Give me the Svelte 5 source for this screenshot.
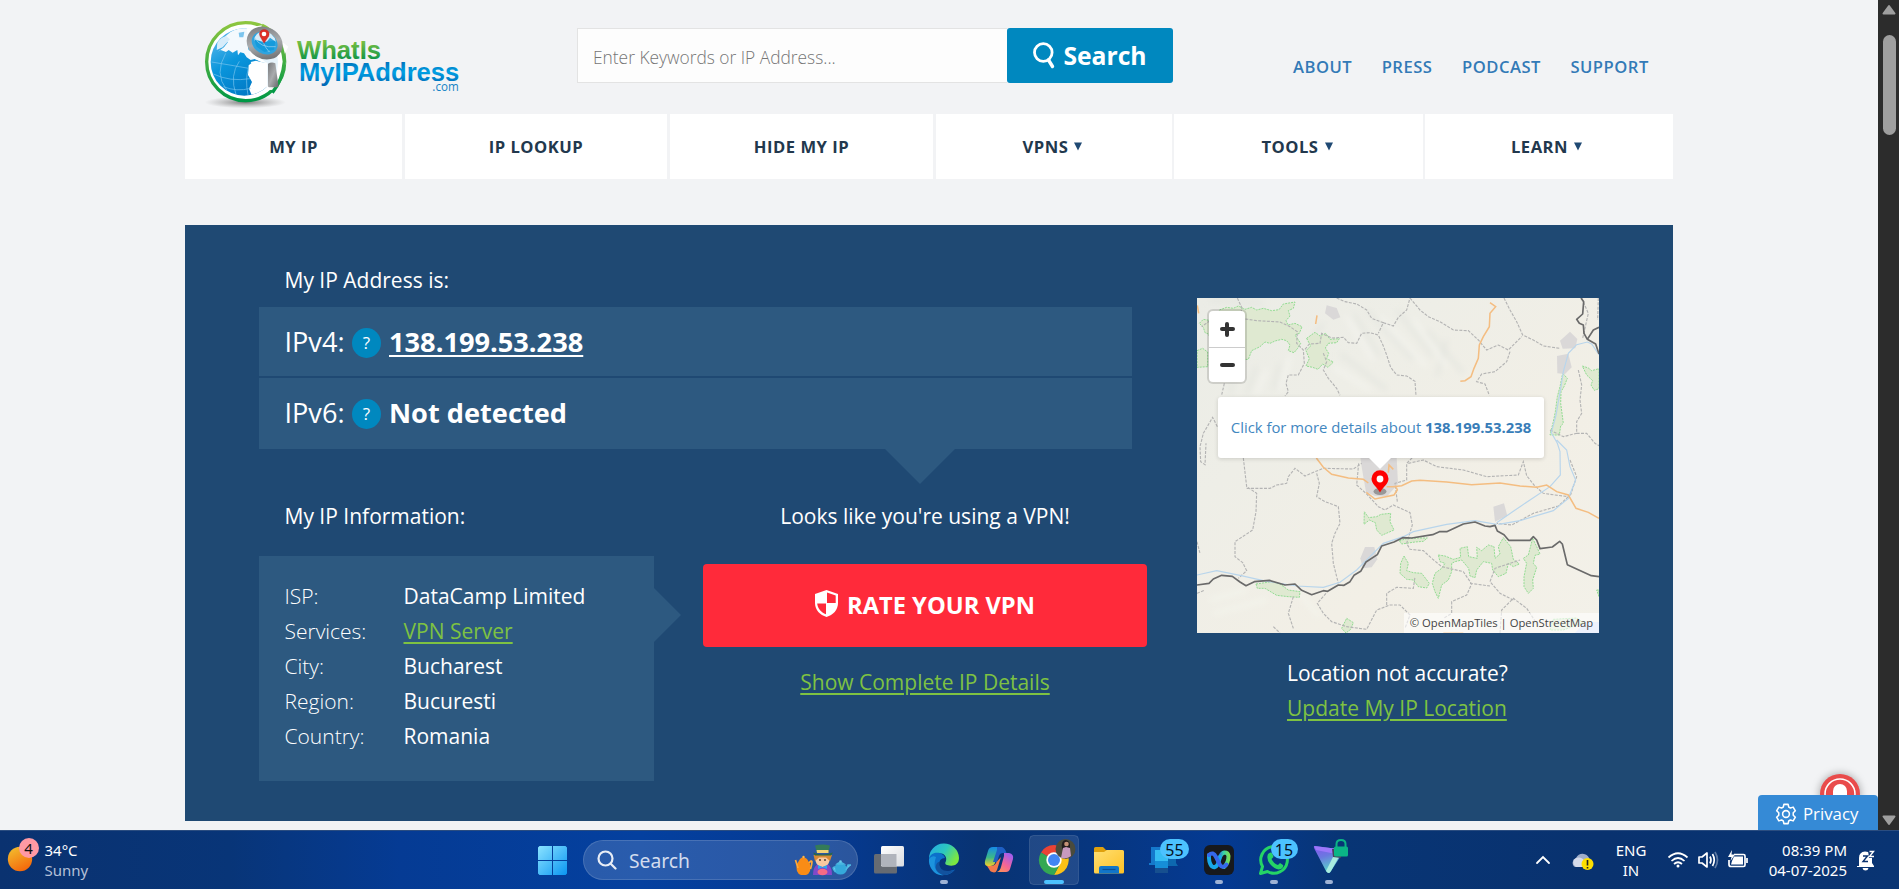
<script>
  const topLinks = ['ABOUT', 'PRESS', 'PODCAST', 'SUPPORT'];
  const menu = [
    { label: 'MY IP' }, { label: 'IP LOOKUP' }, { label: 'HIDE MY IP' },
    { label: 'VPNS', more: true }, { label: 'TOOLS', more: true }, { label: 'LEARN', more: true }
  ];
  const info = [
    ['ISP:', 'DataCamp Limited'], ['Services:', 'VPN Server'], ['City:', 'Bucharest'],
    ['Region:', 'Bucuresti'], ['Country:', 'Romania']
  ];
</script>

<div class="screen">
  <div class="browser">
    <div class="page">
      <header class="top">
        <svg class="logo" viewBox="60 51 792 276">
          <defs>
            <linearGradient id="lgG" x1="0" y1="0" x2="0" y2="1"><stop offset="0" stop-color="#8dc63f" /><stop offset="1" stop-color="#009846" /></linearGradient>
            <linearGradient id="lgT" gradientUnits="userSpaceOnUse" x1="0" y1="118" x2="0" y2="178"><stop offset="0" stop-color="#84c441" /><stop offset="1" stop-color="#129647" /></linearGradient>
            <linearGradient id="lgB" gradientUnits="userSpaceOnUse" x1="0" y1="185" x2="0" y2="255"><stop offset="0" stop-color="#0072bb" /><stop offset=".45" stop-color="#00a0e4" /><stop offset="1" stop-color="#0067b4" /></linearGradient>
            <linearGradient id="lgO" x1="0" y1="0" x2=".6" y2="1"><stop offset="0" stop-color="#6fc0ee" /><stop offset=".5" stop-color="#0a96dc" /><stop offset="1" stop-color="#0077c4" /></linearGradient>
            <linearGradient id="lgM" x1="0" y1="0" x2="1" y2="1"><stop offset="0" stop-color="#77797c" /><stop offset=".5" stop-color="#aaacae" /><stop offset="1" stop-color="#66686a" /></linearGradient>
            <radialGradient id="lgS"><stop offset="0" stop-color="#555" stop-opacity=".75" /><stop offset="1" stop-color="#888" stop-opacity="0" /></radialGradient>
            <clipPath id="lgC"><circle cx="193" cy="186" r="101" /></clipPath>
          </defs>
          <ellipse cx="196" cy="307" rx="122" ry="18" fill="url(#lgS)" />
          <circle cx="197" cy="185" r="117" fill="#fff" stroke="url(#lgG)" stroke-width="10" />
          <circle cx="193" cy="186" r="101" fill="url(#lgO)" />
          <g clip-path="url(#lgC)">
            <path d="M128 120Q155 78 215 82L205 104Q200 130 206 150L240 172 258 188 243 186 225 177 212 180 200 172 192 160 181 157 174 166 172 150 158 158 146 150 138 156 122 150 112 156 132 142 144 126Z" fill="#f3f9fd" />
            <path d="M112 128Q122 112 138 108L150 118 128 142 110 150Z" fill="#d6ecfa" />
            <path d="M176 98L193 95 190 112 178 112Z" fill="#7cc5ee" />
            <path d="M212 186L228 182 243 186 262 188V262L240 278 215 285 207 266 216 246 204 225 206 196 214 190Z" fill="#fff" />
            <path d="M95 186Q150 195 206 205M100 222Q150 246 210 236M130 260Q170 276 212 265M178 184Q148 225 168 284M137 160Q102 220 140 270M205 205Q195 240 204 285" fill="none" stroke="#7cc5ee" stroke-width="2" />
          </g>
          <path d="M200 84L244 76 325 140 306 176 318 186 292 270 260 270 258 190 212 172Z" fill="#fff" opacity=".9" />
          <path d="M246 76Q305 102 313 185Q308 240 277 278" fill="none" stroke="url(#lgG)" stroke-width="10" />
          <ellipse cx="254" cy="129" rx="48" ry="40" transform="rotate(28 254 129)" fill="#2fa4df" stroke="url(#lgM)" stroke-width="15" />
          <path d="M222 120Q226 98 250 93Q282 97 288 126L270 113 258 128 270 154Q246 154 236 139Z" fill="#d7edf9" />
          <path d="M222 118L250 126 286 122 282 149 253 156 230 140Z" fill="#159bdc" />
          <path d="M224 112Q240 145 287 140M247 122Q257 145 267 155" stroke="#a8d7f3" stroke-width="2" fill="none" />
          <path d="M252 130L240 109C229 82 276 82 266 109Z" fill="#dc2e28" stroke="#b51e1d" stroke-width="1" />
          <circle cx="252" cy="102" r="7" fill="#fff" />
          <path d="M264 191Q275 185 286 190L295 256Q296 262 287 262H267Q263 262 264 256Z" fill="url(#lgM)" />
          <text x="351" y="177" class="lt" font-size="80" textLength="252" lengthAdjust="spacingAndGlyphs" fill="url(#lgT)">WhatIs</text>
          <text x="357" y="242" class="lt" font-size="78" textLength="481" lengthAdjust="spacingAndGlyphs" fill="url(#lgB)">MyIPAddress</text>
          <text x="757" y="272" class="lc" font-size="39" textLength="79" lengthAdjust="spacingAndGlyphs">.com</text>
        </svg>
        <form class="find">
          <input placeholder="Enter Keywords or IP Address..." />
          <button type="button">
            <svg width="22" height="28" viewBox="0 0 22 28" fill="none" stroke="#fff"><circle cx="10.3" cy="10.5" r="8.800" stroke-width="2.800" /><path d="M15.500 18l4 6.500" stroke-width="3.400" stroke-linecap="round" /></svg>
            <span>Search</span>
          </button>
        </form>
        <nav class="links">{#each topLinks as l}<a href="#top">{l}</a>{/each}</nav>
      </header>

      <nav class="menu">
        {#each menu as m}
          <a href="#menu" class:more={m.more}><span>{m.label}</span>{#if m.more}<svg width="8" height="9" viewBox="0 0 8 9"><path d="M0 .5h8L4 8.5z" fill="#1f4973" /></svg>{/if}</a>
        {/each}
      </nav>

      <main class="hero">
        <section class="left">
          <h2>My IP Address is:</h2>
          <div class="ips">
            <div class="ip v4"><span class="lab">IPv4:</span><i>?</i><b class="u">138.199.53.238</b></div>
            <div class="ip v6"><span class="lab">IPv6:</span><i>?</i><b>Not detected</b></div>
          </div>
          <div class="lower">
            <div class="about">
              <h2>My IP Information:</h2>
              <dl>
                {#each info as [k, v]}
                  <dt>{k}</dt><dd>{#if v === 'VPN Server'}<a href="#vpn">{v}</a>{:else}{v}{/if}</dd>
                {/each}
              </dl>
            </div>
            <div class="act">
              <p>Looks like you're using a VPN!</p>
              <button type="button" class="rate">
                <svg width="23" height="27" viewBox="0 0 23 27"><path d="M11.5 0L23 4V13C23 20 18 25 11.5 27C5 25 0 20 0 13V4Z" fill="#fff" /><path d="M12 2.6L20.7 5.5V13H12ZM11 13.6V24.3C6 22.5 2.6 18.6 2.2 13.6Z" fill="#ff2a3a" /></svg>
                <span>RATE YOUR VPN</span>
              </button>
              <a href="#details" class="show">Show Complete IP Details</a>
            </div>
          </div>
        </section>

        <section class="right">
          <div class="map">
            <svg viewBox="51 54 1206 1005" width="402" height="335">
              <defs>
                <linearGradient id="land" x1="0" y1="0" x2="1" y2="1"><stop offset="0" stop-color="#ebece6" /><stop offset=".3" stop-color="#eeeee7" /><stop offset=".65" stop-color="#f2efe6" /><stop offset="1" stop-color="#f3f1e9" /></linearGradient>
                <filter id="soft"><feGaussianBlur stdDeviation="9" /></filter>
              </defs>
              <rect x="51" y="54" width="1206" height="1005" fill="url(#land)" />
              <g filter="url(#soft)" fill="none" stroke-width="9">
                <path stroke="#e2e4de" d="M430 130L400 170M520 100L600 230M560 90L700 240M480 220L620 330M650 90L760 230M740 150L850 280M300 250L280 330M230 260L200 340M160 300L150 340M800 180L770 290M90 60L250 70" />
                <path stroke="#f5f5f0" d="M500 110L580 240M600 110L740 260M460 260L570 330M700 120L800 260M330 230L300 330M260 270L230 340" />
                <path stroke="#f4f6ee" d="M90 960L200 930M100 1000L260 960M350 930L420 1010" />
              </g>
              <g class="park">
                <path d="M58 130L70 118 115 126 118 90 140 82 160 85 175 78 195 88 215 82 230 90 250 85 275 92 297 89 310 72 345 66 340 85 325 92 330 108 318 122 324 135 345 130 366 140 358 160 345 165 362 190 353 205 342 218 325 212 330 195 320 182 305 178 285 183 270 190 255 186 240 200 215 212 205 238 160 240 100 190 85 162 75 158 70 142Z" />
                <path d="M51 212L68 205 83 216V260L51 262Z" />
                <path d="M380 175L405 157 420 168 437 160 450 178 478 176 470 188 445 190 436 204 446 220 440 236 460 246 444 262 428 252 414 268 398 262 378 258 388 236 378 212 392 198Z" />
                <path d="M1148 280L1162 295 1152 320 1143 335 1142 370 1150 430 1142 438 1138 465 1110 465 1120 425 1126 395 1132 350 1140 320Z" />
                <path d="M1207 258L1225 264 1235 272 1257 266V326L1243 331 1233 315 1238 302 1220 285Z" />
                <path d="M553 695L566 713 590 710 603 703 632 700 630 725 642 750 605 766 590 750 586 728 568 720 552 733Z" />
                <path d="M228 912L275 905 300 912 325 930 360 935 358 952 325 950 290 946 255 925 232 925Z" />
                <path d="M658 782L680 776 715 774 742 774 730 784 705 786 665 792Z" />
                <path d="M672 828L685 850 680 872 700 878 725 880 748 910 740 924 715 920 700 900 680 898 660 880 662 850Z" />
                <path d="M775 825L795 828 820 838 842 832 840 805 862 800 866 830 892 835 890 802 905 812 925 795 942 800 945 835 960 822 955 800 970 773 992 800 1000 838 1018 852 1000 860 985 850 978 880 955 890 938 870 935 850 910 845 890 870 885 893 870 888 866 865 845 840 825 845 815 850 815 875 805 900 785 915 775 955 765 935 757 910 765 880 785 865 795 850 780 845Z" />
                <path d="M1058 775L1070 800 1080 822 1065 826 1060 850 1070 862 1058 900 1060 925 1045 940 1032 920 1032 890 1040 850 1030 835 1045 825Z" />
                <path d="M500 1015L520 1028 512 1048 498 1059 485 1045ZM1120 1018L1190 1014 1210 1028 1150 1050 1110 1050ZM1250 930H1257V950Z" />
              </g>
              <path fill="#cfdcfa" d="M1215 1026H1257V1059H1185Z" />
              <g fill="#dad8d8">
                <path d="M440 76L470 84 481 112 460 119 435 100Z" /><path d="M1140 182L1170 155 1192 177 1186 205 1148 206Z" /><path d="M1131 228L1165 221 1175 262 1155 282 1132 280Z" />
                <path d="M541 530H650L654 612 620 650 585 648 558 636 550 590 545 560Z" /><path d="M940 680L972 670 982 707 945 725Z" /><path d="M555 801H583L592 838 575 862 548 865 541 835Z" />
              </g>
              <g class="border">
                <path d="M172 54L185 82 182 110 160 120 100 115 65 140M183 115L230 122 300 126 330 140 352 155 350 190 370 210 373 250 355 285 325 285 318 310 325 335 315 348M375 208L388 192 420 190 425 160 455 174 490 172 505 188 530 190 545 160 570 158 595 165 610 198 620 225 632 262 650 285 680 288 705 304 708 348M470 54L495 65 530 72 560 90 575 115 610 128 595 160M610 128L640 138 655 112 680 90 690 54M690 54L720 90 745 110 780 125 820 150 865 152 895 180 920 210 955 195 985 210 1025 170M972 54L990 90 1010 125 1028 165 1060 180 1090 198 1140 205M990 215L980 245 945 275 905 282 890 305 915 312 928 346M430 220L440 245 430 270 445 295 470 325 480 346M1255 54L1253 120M1195 270L1205 315 1200 360 1205 400 1190 425 1190 460 1150 470 1110 450M1190 460L1220 460 1245 490 1257 497" />
                <path d="M133 310L125 345M112 440L98 412 70 460 60 500 62 545 75 554 78 490M190 534L200 620 230 640 228 695 218 750 165 785 165 830 188 848 200 872 175 895M200 625L270 625 290 615 320 610 325 590 345 565 375 588 405 575 430 565 520 567 545 550M410 580L418 610 410 650 435 665 475 680 480 730 465 760 455 790 460 850 475 910M536 550L530 615 558 640 595 680 615 690 640 675 690 698 697 735 680 790 690 808 730 812 755 835 785 860 850 875 875 912 860 945 815 965 815 1000 790 1015M685 550L730 540 770 560 850 570 920 590 1015 585 1030 545 1040 587 1062 615 1090 640 1125 645 1165 650M652 665L645 610 680 600 680 550 700 530M1165 650L1135 678 1060 700 995 735 950 730M1170 540L1190 590 1170 650M438 940L412 970 430 1000 455 1025 500 1040 560 1048 590 990 630 975 660 975 690 1005 675 1045M620 975L620 940 650 922 700 925 705 890M340 950L325 1000 340 1045M280 1040L300 1059M51 785L60 820M51 940L75 930M960 1059L965 990 1000 955 1040 985 1070 1030M1000 960L960 940 930 905 945 865 1020 840M870 910L930 918M1205 54L1225 100 1208 175" />
              </g>
              <g fill="none" stroke="#b8d5ec" stroke-width="3.5">
                <path d="M1257 224L1235 192 1222 186 1190 194 1165 220 1150 275 1143 320 1128 405 1114 458 1132 490 1140 515 1141 585 1110 620 1020 680 950 728M1130 480L1160 510 1170 560 1187 600 1165 655 1120 692 1020 722 955 733M51 885L110 872 180 886 250 902 350 918 430 922 480 907 530 870 570 830 610 790 670 770 700 755 800 733 885 722 950 733" />
              </g>
              <g fill="none" stroke="#f4bd81" stroke-width="4.600">
                <path d="M52 76L56 100M411 106L407 132M930 68L947 80 930 100 928 140 910 170 898 195 895 235 882 265 873 290 855 302 841 304M409 534L430 562 455 583 505 594 550 598 565 609M559 637L585 657 642 645 652 630 648 620 620 620M625 578L627 555 640 568M638 620L665 617 695 603 720 601 800 606 875 614 960 609 1020 618 1070 622 1100 615 1130 635 1165 645 1188 685 1225 697 1257 715M790 1058H850" />
              </g>
              <path fill="none" stroke="#6a6a6a" stroke-width="5" stroke-linejoin="round" d="M51 915L87 910 100 897 125 886 157 889 180 906 198 917 223 905 268 901 315 915 345 912 365 931 395 944 430 932 443 934 475 915 492 916 510 905 522 886 542 874 558 846 592 824 605 798 642 786 668 773 695 774 758 764 778 755 800 755 850 732 885 726 915 738 930 740 945 736 952 753 972 764 986 781 1050 781 1060 770 1070 780 1080 806 1117 801 1139 784 1147 792 1162 854 1234 887 1257 890M1203 54L1211 65 1208 102 1190 118 1198 130 1210 135 1212 160 1222 178 1247 192 1257 222M1222 178L1240 150 1257 142" />
            </svg>
            <div class="zoom"><span class="zp"></span><span class="zm"></span></div>
            <div class="pop">Click for more details about <b>138.199.53.238</b></div>
            <svg class="pin" width="40" height="34" viewBox="0 0 40 34"><ellipse cx="20" cy="21.500" rx="6.500" ry="3.500" fill="#000" opacity=".3" /><path d="M20 22.5C17 17 11.5 14 11.5 8.8a8.5 8.5 0 0 1 17 0C28.500 14 23 17 20 22.500Z" fill="#fe0000" /><circle cx="20" cy="9" r="3.4" fill="#fff" /></svg>
            <div class="attr">© OpenMapTiles | OpenStreetMap</div>
          </div>
          <p class="loc">Location not accurate?<br /><a href="#update">Update My IP Location</a></p>
        </section>
      </main>

      <div class="alert"><svg width="60" height="60" viewBox="0 0 60 60"><circle cx="30" cy="30" r="20" fill="#e94b4b" /><circle cx="30" cy="30" r="15" fill="none" stroke="#fff" stroke-width="1.500" /><path d="M23 34V27a7 7 0 0 1 14 0V34Z" fill="#fff" /></svg></div>
      <div class="privacy">
        <svg width="22" height="22" viewBox="0 0 24 24" fill="none" stroke="#fff" stroke-width="1.700" stroke-linejoin="round"><path d="M9.7 1.500h4.600l.7 3 1.800 1 3-1 2.400 4-2.300 2.200v2.600l2.300 2.200-2.400 4-3-1-1.800 1-.7 3H9.700l-.7-3-1.800-1-3 1-2.400-4 2.300-2.200v-2.600L1.800 8.500l2.400-4 3 1 1.800-1z" /><circle cx="12" cy="12" r="3.700" /></svg>
        <span>Privacy</span>
      </div>
    </div>
    <div class="scroll">
      <svg width="21" height="20" viewBox="0 0 21 20"><path d="M11 6L16.500 13.500H5.500Z" fill="#9f9f9f" stroke="#9f9f9f" stroke-width="2" stroke-linejoin="round" /></svg>
      <span class="thumb"></span>
      <svg class="dn" width="21" height="20" viewBox="0 0 21 20"><path d="M11 14L16.500 6.500H5.500Z" fill="#9f9f9f" stroke="#9f9f9f" stroke-width="2" stroke-linejoin="round" /></svg>
    </div>
  </div>

  <footer class="bar">
    <div class="weather">
      <svg width="41" height="58" viewBox="0 831 41 58">
        <defs><linearGradient id="sun" x1=".2" y1="0" x2=".7" y2="1"><stop offset="0" stop-color="#f2bd2e" /><stop offset="1" stop-color="#f5650a" /></linearGradient></defs>
        <circle cx="20" cy="859" r="12.200" fill="url(#sun)" /><circle cx="29" cy="848" r="10" fill="#ff99a4" />
        <text x="28.500" y="853.500" text-anchor="middle" font-size="15" fill="#111">4</text>
      </svg>
      <p>34°C<br /><span>Sunny</span></p>
    </div>
    <svg class="start" width="29" height="29" viewBox="0 0 29 29">
      <defs><linearGradient id="win" x1="0" y1="0" x2="1" y2="1"><stop offset="0" stop-color="#8be3ff" /><stop offset="1" stop-color="#0a95f2" /></linearGradient></defs>
      <path d="M1.500 0H14V14H0V1.500ZM15 0H27.500L29 1.500V14H15ZM0 15H14V29H1.500L0 27.500ZM15 15H29V27.500L27.500 29H15Z" fill="url(#win)" />
    </svg>
    <div class="wsearch">
      <svg width="20" height="20" viewBox="0 0 20 20" fill="none" stroke="#e8edf6" stroke-width="2.200"><circle cx="8.500" cy="8.500" r="7" /><path d="M13.500 13.500L18.500 18.500" stroke-linecap="round" /></svg>
      <span>Search</span>
      <svg class="hat" width="58" height="34" viewBox="792 843 58 34">
        <path d="M799 859Q802 855.500 806 859L809 864Q811 873 805 875H800Q794 873 796 864Z" fill="#f98c16" /><path d="M797 868L794.500 860M808 863Q813 857 809.500 869" fill="none" stroke="#ffa938" stroke-width="1.700" /><circle cx="802.500" cy="857" r="1.200" fill="#ffb545" />
        <path d="M812 875Q812 863 822 863Q831 863 831 875Z" fill="#8149c9" /><path d="M814 856Q814 867 821.500 867Q829 867 829 856Z" fill="#f8c9a0" /><path d="M812.500 855L831 855 829 861 825 857.500 818 857.500 814 861Z" fill="#d78a35" />
        <path d="M814 845.500Q821 843.500 829 845.500L827 853H816Z" fill="#347b59" /><path d="M815.500 850H827.500V853H816Z" fill="#efd276" /><path d="M812 852.500Q821 856.500 832 852.500L830 855.500H814Z" fill="#286749" />
        <path d="M817 865L821.500 867 826 865V869L821.500 867.500 817 869Z" fill="#2aa5ef" /><circle cx="819" cy="860" r=".9" fill="#3c3326" /><circle cx="824" cy="860" r=".9" fill="#3c3326" /><ellipse cx="821.500" cy="872" rx="5" ry="3.300" fill="#f56b85" />
        <ellipse cx="839.500" cy="869" rx="6.500" ry="5.500" fill="#35a9db" /><path d="M836 864Q839 861 843 864ZM845 870L847 865 850 865M834 867Q830 867 834.500 872" fill="#6bcaea" stroke="#49b8e2" stroke-width="1.500" /><circle cx="839.500" cy="861.500" r="1.300" fill="#6bcaea" />
      </svg>
    </div>
    <div class="apps">
      <svg viewBox="861 831 55 58">
        <defs><linearGradient id="tv" x1="0" y1="0" x2="1" y2="1"><stop offset="0" stop-color="#fff" /><stop offset="1" stop-color="#d9dce0" /></linearGradient></defs>
        <rect x="874" y="854" width="23" height="19.500" rx="1.500" fill="#666b72" /><rect x="881" y="846" width="23" height="20.500" rx="1.500" fill="url(#tv)" /><path d="M881 854H896.500V866.500H882.500L881 865Z" fill="#b0b4bc" />
      </svg>
      <svg viewBox="916 831 55 58">
        <defs><linearGradient id="ed" x1="0" y1="0" x2="1" y2=".5"><stop offset="0" stop-color="#23a7e8" /><stop offset=".55" stop-color="#2cc8bf" /><stop offset="1" stop-color="#7be741" /></linearGradient></defs>
        <path d="M929 859A15 15 0 0 1 959 858C959 865 953 867 947 865Q944 864 946 861C948 854 938 849 929 859Z" fill="url(#ed)" />
        <path d="M929 858C932 850 944 852 945 858Q939 858 939 865 940 875 955 869.500C951 875 944 876 939 874Q929 870 929 858Z" fill="#0c70cb" /><path d="M936 857Q931 872 944 875C935 877 928 867 929 859Q932 855 936 857Z" fill="#1c93dd" /><path d="M939 862Q939 874 954.500 870C951 874 947 875 943 875 932 871 936 862 939 862Z" fill="#12529e" />
        <rect x="940" y="880" width="8" height="4" rx="2" fill="#9db2d5" />
      </svg>
      <svg viewBox="971 831 55 58">
        <defs><linearGradient id="cp1" x1="0" y1="0" x2="0" y2="1"><stop offset="0" stop-color="#168be8" /><stop offset=".55" stop-color="#3cb987" /><stop offset="1" stop-color="#f4cf29" /></linearGradient><linearGradient id="cp2" x1=".6" y1="0" x2="0" y2="1"><stop offset="0" stop-color="#a65ee9" /><stop offset=".5" stop-color="#f56596" /><stop offset="1" stop-color="#fd9a4e" /></linearGradient></defs>
        <path d="M993 847H1002Q1000 847 999 850L995 863Q994 866 990 866H988Q984 866 985 861L988 851Q989 847 993 847Z" fill="url(#cp1)" /><path d="M997 847H1002Q1005 848 1006.500 853H1003Q1000 853 999 856L997 862H993L997 850Z" fill="#1e5fc4" />
        <path d="M1004 853H1009Q1014 854 1013 859L1010 869Q1009 872 1006 872H997Q1000 871 1001 867L1004 856Z" fill="url(#cp2)" /><path d="M987 866H991Q995 866 996.500 862L1001 857 997 870Q996 872.500 994 872.500 990 872 989 869Z" fill="#f47a4c" />
      </svg>
      <svg viewBox="1026 831 55 58">
        <rect x="1029.500" y="835.500" width="49" height="49" rx="4" fill="#fff" fill-opacity=".1" stroke="#fff" stroke-opacity=".13" />
        <path d="M1054 860L1041 852.500A15 15 0 0 1 1067 852.500H1054Z" fill="#ea4335" /><path d="M1054 860V853H1067A15 15 0 0 1 1054 875L1060 864Z" fill="#fbc116" /><path d="M1054 860L1060 864 1054 875A15 15 0 0 1 1041 852.500Z" fill="#34a853" />
        <circle cx="1054" cy="860" r="7.700" fill="#fff" /><circle cx="1054" cy="860" r="6" fill="#4285f4" />
        <circle cx="1065.500" cy="849" r="10" fill="#4a4b3c" /><path d="M1062 848Q1061 840 1066 840Q1071 841 1070 849L1067 850H1063Z" fill="#221d1d" /><circle cx="1066.500" cy="844" r="2.300" fill="#c59277" /><path d="M1063 848L1066 847 1070 848 1071 856Q1067 859.500 1061 858Z" fill="#c79abf" />
        <rect x="1044" y="880" width="20" height="4" rx="2" fill="#4cc2ff" />
      </svg>
      <svg viewBox="1081 831 55 58">
        <defs><linearGradient id="fo" x1="0" y1="0" x2="1" y2="1"><stop offset="0" stop-color="#ffdf72" /><stop offset="1" stop-color="#fdc125" /></linearGradient></defs>
        <path d="M1094 848.500Q1094 847 1095.500 847H1103L1106 850H1112V856H1094Z" fill="#dfa00d" /><path d="M1094 852H1104L1107 850H1122.500Q1124 850 1124 851.500V872Q1124 873.500 1122.500 873.500H1095.500Q1094 873.500 1094 872Z" fill="url(#fo)" /><path d="M1099 873.500V868Q1099 866 1101 866H1117Q1119 866 1119 868V873.500Z" fill="#1276c9" /><path d="M1102.500 869.500H1115.500" stroke="#0b4f97" stroke-width="1.200" />
      </svg>
      <svg viewBox="1136 831 55 58">
        <path d="M1151 847H1165V872H1155V865H1149V863H1151Z" fill="#1579cc" /><path d="M1165 858H1176V863L1178 866H1155V858Z" fill="#0d68af" /><path d="M1155 850H1168V861H1155Z" fill="#36bdf3" /><path d="M1155 861H1168V868H1155Z" fill="#168ed8" /><path d="M1155 868H1168V873H1155Z" fill="#164f8f" />
        <rect x="1160" y="839" width="29" height="20" rx="10" fill="#4cc2ff" /><text x="1174.500" y="856" text-anchor="middle" font-size="16" fill="#06101f">55</text>
      </svg>
      <svg viewBox="1191 831 55 58">
        <defs><linearGradient id="wx" gradientUnits="userSpaceOnUse" x1="1207" y1="0" x2="1229" y2="0"><stop offset="0" stop-color="#15a9ed" /><stop offset=".5" stop-color="#2857e5" /><stop offset=".75" stop-color="#37d2aa" /><stop offset="1" stop-color="#79df56" /></linearGradient></defs>
        <rect x="1204" y="845" width="30" height="30" rx="6" fill="#17191d" />
        <path d="M1220 857Q1221.500 853 1224.500 852.500 1228 852.500 1228.500 856 1228.500 863 1224 867" fill="none" stroke="url(#wx)" stroke-width="4" stroke-linecap="round" /><path d="M1209 855Q1208.500 862 1211.500 866 1215 869 1218 864L1220 857" fill="none" stroke="#18a8e8" stroke-width="4" stroke-linecap="round" /><path d="M1209 855Q1213 851 1216 857L1220 865Q1223 869 1226.500 864.500" fill="none" stroke="#3568eb" stroke-width="4" stroke-linecap="round" />
        <rect x="1215" y="880" width="8" height="4" rx="2" fill="#9db2d5" />
      </svg>
      <svg viewBox="1246 831 55 58">
        <path d="M1260.500 873.500L1262.500 866.500A13.300 13.300 0 1 1 1267.500 871.500Z" fill="none" stroke="#25d366" stroke-width="3" stroke-linejoin="round" /><path d="M1268 854Q1271 851 1272.500 854L1273.500 857 1271.500 859Q1274 864 1278 865L1280 863 1283 865Q1284 867 1281 869 1276 871 1270 864 1266 859 1268 854Z" fill="#25d366" />
        <rect x="1271" y="839" width="27" height="20" rx="10" fill="#4cc2ff" /><text x="1284" y="856" text-anchor="middle" font-size="16" fill="#06101f">15</text><rect x="1270" y="880" width="8" height="4" rx="2" fill="#9db2d5" />
      </svg>
      <svg viewBox="1301 831 55 58">
        <defs><linearGradient id="pv" x1="0" y1="0" x2=".35" y2="1"><stop offset="0" stop-color="#8554f0" /><stop offset=".45" stop-color="#6b78e0" /><stop offset="1" stop-color="#57d7c9" /></linearGradient></defs>
        <path d="M1315 846L1338 849Q1344 850 1342 854L1331 871Q1329 875 1326 871L1314.500 849Q1313 846 1315 846Z" fill="url(#pv)" /><path d="M1314 846L1338 849Q1344 850 1341 855L1316 850Z" fill="#9b78fa" /><path d="M1340 855L1331 871Q1329 875 1326 871L1334 855Z" fill="#a9ece0" /><path d="M1332 849H1342L1341 858 1333 857Z" fill="#49405e" />
        <path d="M1336.500 848V844Q1336.500 840 1341 840Q1345.500 840 1345.500 844V848" fill="none" stroke="#0bb586" stroke-width="2" /><rect x="1334" y="846.500" width="14" height="10" rx="1.500" fill="#0bb586" /><rect x="1325" y="880" width="8" height="4" rx="2" fill="#9db2d5" />
      </svg>
    </div>
    <div class="tray">
      <svg width="74" height="58" viewBox="1530 831 74 58">
        <path d="M1537 863L1543 857 1549 863" fill="none" stroke="#fff" stroke-width="1.800" stroke-linecap="round" /><path d="M1575 867A5 5 0 0 1 1576 858Q1579 853 1584 854 1589 855 1590 861L1587 867Z" fill="#9fadc9" /><path d="M1576 858Q1582 856 1586 863L1583 867H1576A5 5 0 0 1 1576 858Z" fill="#d5dbea" /><circle cx="1587.500" cy="864" r="6" fill="#fddf00" /><path d="M1587.500 860V865.500M1587.500 867V868.500" stroke="#222" stroke-width="1.600" />
      </svg>
      <p class="lang">ENG<br />IN</p>
      <svg width="90" height="58" viewBox="1663 831 90 58" fill="none" stroke="#fff" stroke-width="1.700">
        <path d="M1668.500 857.500Q1678 849 1687.500 857.500M1671.500 861Q1678 855 1684.500 861M1674 864Q1678 860.500 1682 864" /><circle cx="1678" cy="866" r="1.500" fill="#fff" stroke="none" />
        <path d="M1699 857H1702L1707 853V867L1702 863H1699Z" stroke-linejoin="round" /><path d="M1710 856.500Q1712 860 1710 863.500M1712.500 854Q1716 860 1712.500 866" /><path d="M1715 852Q1720 860 1715 868" stroke-opacity=".35" />
        <path d="M1734 854.500H1743.500Q1745 854.500 1745 856V865Q1745 866.500 1743.500 866.500H1731Q1729 866.500 1729 864.500V860M1747 858V863" /><path d="M1732 861L1734 856.500H1743V864.500H1731Z" fill="#fff" stroke="none" /><path d="M1732 850L1728 857H1731.500L1730.500 861 1735 854.500H1731.500Z" fill="#fff" stroke="none" />
      </svg>
      <p class="clock">08:39 PM<br />04-07-2025</p>
      <svg width="26" height="58" viewBox="1853 831 26 58"><path d="M1859 866V858Q1859 852 1865 851.500 1872 852 1872 858V863L1874 866V867H1857V866ZM1862.500 868H1868.500Q1868 870.500 1865.500 870.500 1863 870.500 1862.500 868Z" fill="#fff" /><path d="M1863 856H1867.500L1863 861.500H1868" fill="none" stroke="#0a316e" stroke-width="1.400" /><path d="M1868 850H1875V858H1869Z" fill="#0a316e" /><path d="M1869.500 851.500H1873.500L1869.500 856.500H1874" fill="none" stroke="#fff" stroke-width="1.400" /></svg>
    </div>
  </footer>
</div>

<style>
  :global(body) { margin: 0; overflow: hidden; }
  .screen { width: 1899px; height: 889px; display: flex; flex-direction: column; font-family: "Open Sans", sans-serif; overflow: hidden; }
  .screen * { box-sizing: border-box; }
  p, h2, dl, dd { margin: 0; font-weight: 400; }
  a { text-decoration: none; }
  svg { display: block; flex: none; }
  .browser { height: 830px; display: flex; }
  .page { width: 1878px; height: 830px; background: #f2f3f5; position: relative; overflow: hidden; padding-left: 185px; }
  .top { height: 114px; display: flex; align-items: flex-start; }
  .logo { width: 264px; height: 92px; margin: 17px 0 0 15px; }
  .lt { font-family: "Liberation Sans", sans-serif; font-weight: 700; }
  .lc { font-family: "Open Sans", sans-serif; fill: #1683c5; }
  .find { display: flex; margin: 28px 0 0 113px; height: 55px; }
  .find input { width: 430px; border: 1px solid #e3e3e3; background: #fdfdfd; padding: 2px 15px 0; font: 300 17.35px "Open Sans", sans-serif; color: #757575; border-right: 0; outline: 0; border-radius: 0; }
  .find input::placeholder { color: #757575; opacity: 1; }
  .find button { width: 166px; border: 0; border-radius: 3px; background: #0088bf; color: #fff; display: flex; align-items: center; justify-content: center; gap: 8px; font: 700 24.7px "Open Sans", sans-serif; padding: 0; }
  .links { display: flex; gap: 29.5px; margin: 55px 0 0 120px; font-size: 16.6px; font-weight: 600; line-height: 24px; letter-spacing: .5px; }
  .links a { color: #337ab7; }
  .menu { width: 1488px; height: 65px; display: grid; grid-template-columns: 220px 265px 266px 238px 251px 248px; }
  .menu a { margin-right: 3px; background: #fff; color: #22384d; font-weight: 700; font-size: 16.6px; letter-spacing: .5px; display: flex; align-items: center; justify-content: center; gap: 6px; }
  .menu a.more { margin-right: 2px; padding-right: 3px; }
  .menu a:last-child { margin-right: 0; padding-right: 5px; }
  .hero { margin-top: 46px; width: 1488px; height: 596px; background: #1f4973; color: #fff; padding-left: 74px; display: flex; font-size: 21px; line-height: 35px; }
  h2, .act p { font-size: 21px; line-height: 35px; }
  .left { width: 888px; padding-top: 38px; }
  h2 { padding-left: 25.5px; }
  .ips { width: 873px; margin-top: 9px; position: relative; display: grid; gap: 2px; }
  .ips::after { content: ""; position: absolute; left: 626px; top: 100%; border: 35px solid transparent; border-top-color: #2d5980; border-bottom: 0; }
  .ip { background: #2d5980; display: flex; align-items: center; padding-left: 25.5px; font-size: 27.1px; }
  .v4 { height: 69px; padding-bottom: 1px; } .v6 { height: 71px; padding-bottom: 3px; }
  .lab { font-weight: 400; width: 67.5px; }
  .ip i { width: 29px; height: 30px; border-radius: 50%; background: #0088bf; font-size: 17px; font-style: normal; line-height: 30px; text-align: center; margin-top: 3px; }
  .ip b { margin-left: 8px; font-size: 27.2px; }
  .u { text-decoration: underline; text-decoration-thickness: 2px; text-underline-offset: 3px; }
  .lower { display: grid; grid-template-columns: 395px 444px; gap: 49px; margin-top: 50px; }
  dl { margin-top: 22px; height: 225px; background: #2d5980; padding: 23px 0 0 25.5px; display: grid; grid-template-columns: 119px 1fr; grid-auto-rows: 35px; position: relative; }
  dl::after { content: ""; position: absolute; left: 100%; top: 32px; border: 27.5px solid transparent; border-left-color: #2d5980; border-right: 0; }
  dt { font-weight: 300; }
  .hero a { color: #7ec242; text-decoration: underline; text-decoration-thickness: 2px; text-underline-offset: 3px; }
  .act { display: flex; flex-direction: column; align-items: center; }
  .rate { margin: 30px 0 18px; width: 444px; height: 83px; border: 0; border-radius: 4px; background: #ff2a3a; color: #fff; display: flex; align-items: center; justify-content: center; gap: 9px; padding: 0 0 2px; font: 700 23.7px "Open Sans", sans-serif; }
  .rate svg { margin-top: -2px; }
  .right { margin-left: 50px; width: 402px; padding-top: 73px; text-align: center; }
  .map { position: relative; width: 402px; height: 335px; overflow: hidden; }
  .park path { fill: #dfe9d1; stroke: #93dc93; stroke-width: 3; stroke-dasharray: 6 3; }
  .border path { fill: none; stroke: #b4b4b4; stroke-width: 3.4; stroke-dasharray: 9 4; }
  .zoom { position: absolute; left: 12px; top: 13px; width: 36px; height: 71px; background: #fff; border-radius: 4px; box-shadow: 0 0 0 2px rgba(0,0,0,.13); display: grid; grid-template-rows: 37px 34px; }
  .zoom span { position: relative; display: flex; align-items: center; justify-content: center; }
  .zp { border-bottom: 1px solid #ccc; }
  .zoom span::before { content: ""; width: 15px; height: 3.5px; border-radius: 2px; background: #333; }
  .zp::after { content: ""; position: absolute; width: 4px; height: 15px; border-radius: 2px; background: #333; }
  .pop { position: absolute; left: 21px; top: 99px; width: 326px; height: 61px; background: #fff; border-radius: 3px; box-shadow: 0 1px 4px rgba(0,0,0,.15); font-size: 14.85px; line-height: 60px; color: #4287bf; white-space: nowrap; }
  .pop b { color: #387db8; }
  .pop::after { content: ""; position: absolute; left: 151px; top: 100%; border: 11px solid transparent; border-top-color: #fff; border-bottom: 0; }
  .pin { position: absolute; left: 163px; top: 172px; }
  .attr { position: absolute; right: 0; bottom: 0; width: 195px; height: 20px; background: rgba(255,255,255,.6); color: #444; font-size: 11.25px; line-height: 20px; white-space: nowrap; }
  .loc { margin-top: 23px; text-align: left; padding-left: 90px; white-space: nowrap; }
  .alert { position: absolute; left: 1810px; top: 764px; filter: drop-shadow(0 0 4px rgba(0,0,0,.35)); }
  .privacy { position: absolute; right: 0; bottom: 0; width: 120px; height: 35px; border-radius: 4px 4px 0 0; background: #358ad6; color: #fff; display: flex; align-items: center; padding: 2px 0 0 17px; gap: 6px; font-size: 16.8px; }
  .scroll { width: 21px; background: #2c2c2c; display: flex; flex-direction: column; align-items: center; }
  .thumb { width: 13px; height: 100px; border-radius: 7px; background: #9f9f9f; margin: 15px 0 0 2px; }
  .dn { margin-top: auto; }
  .bar { height: 59px; border-top: 1px solid #2b4d80; display: flex; align-items: center; color: #fff; font-family: "Noto Sans", sans-serif; background: linear-gradient(90deg, #0a3270 0, #083578 230px, #053b94 400px, #04409f 640px, #053a93 820px, #083373 980px, #07367f 1090px, #043a93 1220px, #083575 1340px, #09326f 1600px, #093473 1899px); }
  .weather { display: flex; align-items: center; width: 538px; font-size: 15px; line-height: 20px; }
  .weather p { padding: 0 0 1px 3.5px; }
  .weather span { color: #b4c0d8; }
  .wsearch { margin-left: 16px; width: 275px; height: 40px; border-radius: 20px; background: rgba(255,255,255,.15); box-shadow: inset 0 0 0 1px rgba(255,255,255,.14); display: flex; align-items: center; padding-left: 14px; }
  .wsearch span { margin-left: 12px; font-size: 19.3px; color: #d3dcee; flex: 1; padding-top: 1px; }
  .hat { margin-right: 7px; }
  .apps { display: flex; margin-left: 3px; }
  .apps svg { width: 55px; height: 58px; }
  .tray { display: flex; align-items: center; margin-left: 174px; }
  .tray p { font-size: 15px; line-height: 20px; }
  .lang { width: 54px; text-align: center; }
  .tray > .lang { padding-bottom: 1px; margin-right: 5px; }
  .clock { width: 94px; text-align: right; margin-right: 6px; padding-bottom: 1px; }
</style>
